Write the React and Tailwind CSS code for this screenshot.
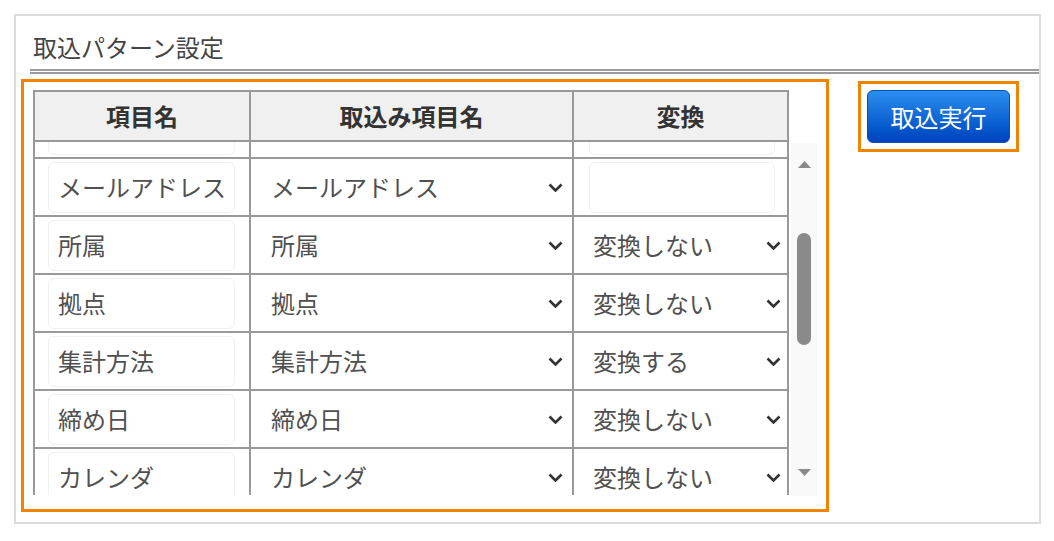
import React from "react";

const rows = [
  { name: "", field: "", conv: null },
  { name: "メールアドレス", field: "メールアドレス", conv: null },
  { name: "所属", field: "所属", conv: "変換しない" },
  { name: "拠点", field: "拠点", conv: "変換しない" },
  { name: "集計方法", field: "集計方法", conv: "変換する" },
  { name: "締め日", field: "締め日", conv: "変換しない" },
  { name: "カレンダ", field: "カレンダ", conv: "変換しない" },
  { name: "", field: "", conv: "" },
];

const Chevron = () => (
  <svg width="15" height="9" viewBox="0 0 15 9" className="shrink-0">
    <path d="M1.5 1.5l6 6 6-6" fill="none" stroke="#333" strokeWidth="2.6" />
  </svg>
);

const App = () => {
  return (
    <div
      className="w-[1054px] h-[541px] bg-white pt-[14px] pl-[14px]"
      style={{ fontFamily: '"Noto Sans CJK JP", "Noto Sans", sans-serif' }}
    >
      <div className="w-[1027px] h-[510px] border-2 border-[#dcdcdc] flex flex-col">
        <div className="pl-[17px] pt-[17px] text-[24px] leading-[28px] text-[#444]">取込パターン設定</div>
        <div className="ml-[14px] mt-[8px] h-[5px] border-y-2 border-[#9c9c9c]" />

        <div className="flex items-start ml-[5px] mt-[5px]">
          {/* mapping table */}
          <div className="w-[808px] h-[433px] border-[3px] border-[#f08300] pt-[8px] pl-[9px] flex items-start">
            <div className="w-[756px]">
              <div className="grid grid-cols-[216px_323px_213px] h-[52px] border-2 border-[#999] bg-[#f0f0f0] text-[24px] font-bold text-[#333]">
                <div className="flex items-center justify-center border-r-2 border-[#999]">項目名</div>
                <div className="flex items-center justify-center border-r-2 border-[#999]">取込み項目名</div>
                <div className="flex items-center justify-center">変換</div>
              </div>
              <div className="h-[353px] overflow-hidden border-x-2 border-[#999] text-[24px] text-[#505050]">
                <div className="-mt-[41px]">
                  {rows.map((r, i) => (
                    <div key={i} className="grid grid-cols-[216px_323px_213px] h-[58px] border-b-2 border-[#999]">
                      <div className="flex items-center pl-[13px] border-r-2 border-[#999]">
                        <div className="w-[187px] h-[51px] border border-[#f0f0f0] rounded-[6px] pl-[9px] flex items-center whitespace-nowrap">
                          {r.name}
                        </div>
                      </div>
                      <div className="flex items-center justify-between pl-[20px] pr-[9px] border-r-2 border-[#999]">
                        <span>{r.field}</span>
                        {r.field && <Chevron />}
                      </div>
                      {r.conv ? (
                        <div className="flex items-center justify-between pl-[19px] pr-[6px]">
                          <span>{r.conv}</span>
                          <Chevron />
                        </div>
                      ) : (
                        <div className="flex items-center pl-[15px]">
                          {r.conv === null && (
                            <div className="w-[186px] h-[51px] border border-[#f0f0f0] rounded-[6px]" />
                          )}
                        </div>
                      )}
                    </div>
                  ))}
                </div>
              </div>
            </div>

            {/* scrollbar */}
            <div className="mt-[53px] ml-[2px] w-[26px] h-[353px] bg-[#f9f9f9] flex flex-col items-center">
              <svg width="13" height="7" viewBox="0 0 13 7" className="mt-[18px]">
                <path d="M0 7L6.5 0 13 7z" fill="#8a8a8a" />
              </svg>
              <div className="mt-[65px] w-[14px] h-[112px] rounded-full bg-[#8a8a8a]" />
              <svg width="13" height="7" viewBox="0 0 13 7" className="mt-auto mb-[20px]">
                <path d="M0 0h13L6.5 7z" fill="#8a8a8a" />
              </svg>
            </div>
          </div>

          {/* run button */}
          <div className="ml-[29px] mt-[2px] border-[3px] border-[#f08300] p-[6px]">
            <button className="w-[143px] h-[53px] rounded-[6px] border border-[#0b4fae] bg-gradient-to-b from-[#2c8ef0] to-[#0042bd] text-white text-[24px] leading-none flex items-center justify-center">
              取込実行
            </button>
          </div>
        </div>
      </div>
    </div>
  );
};

export default App;
